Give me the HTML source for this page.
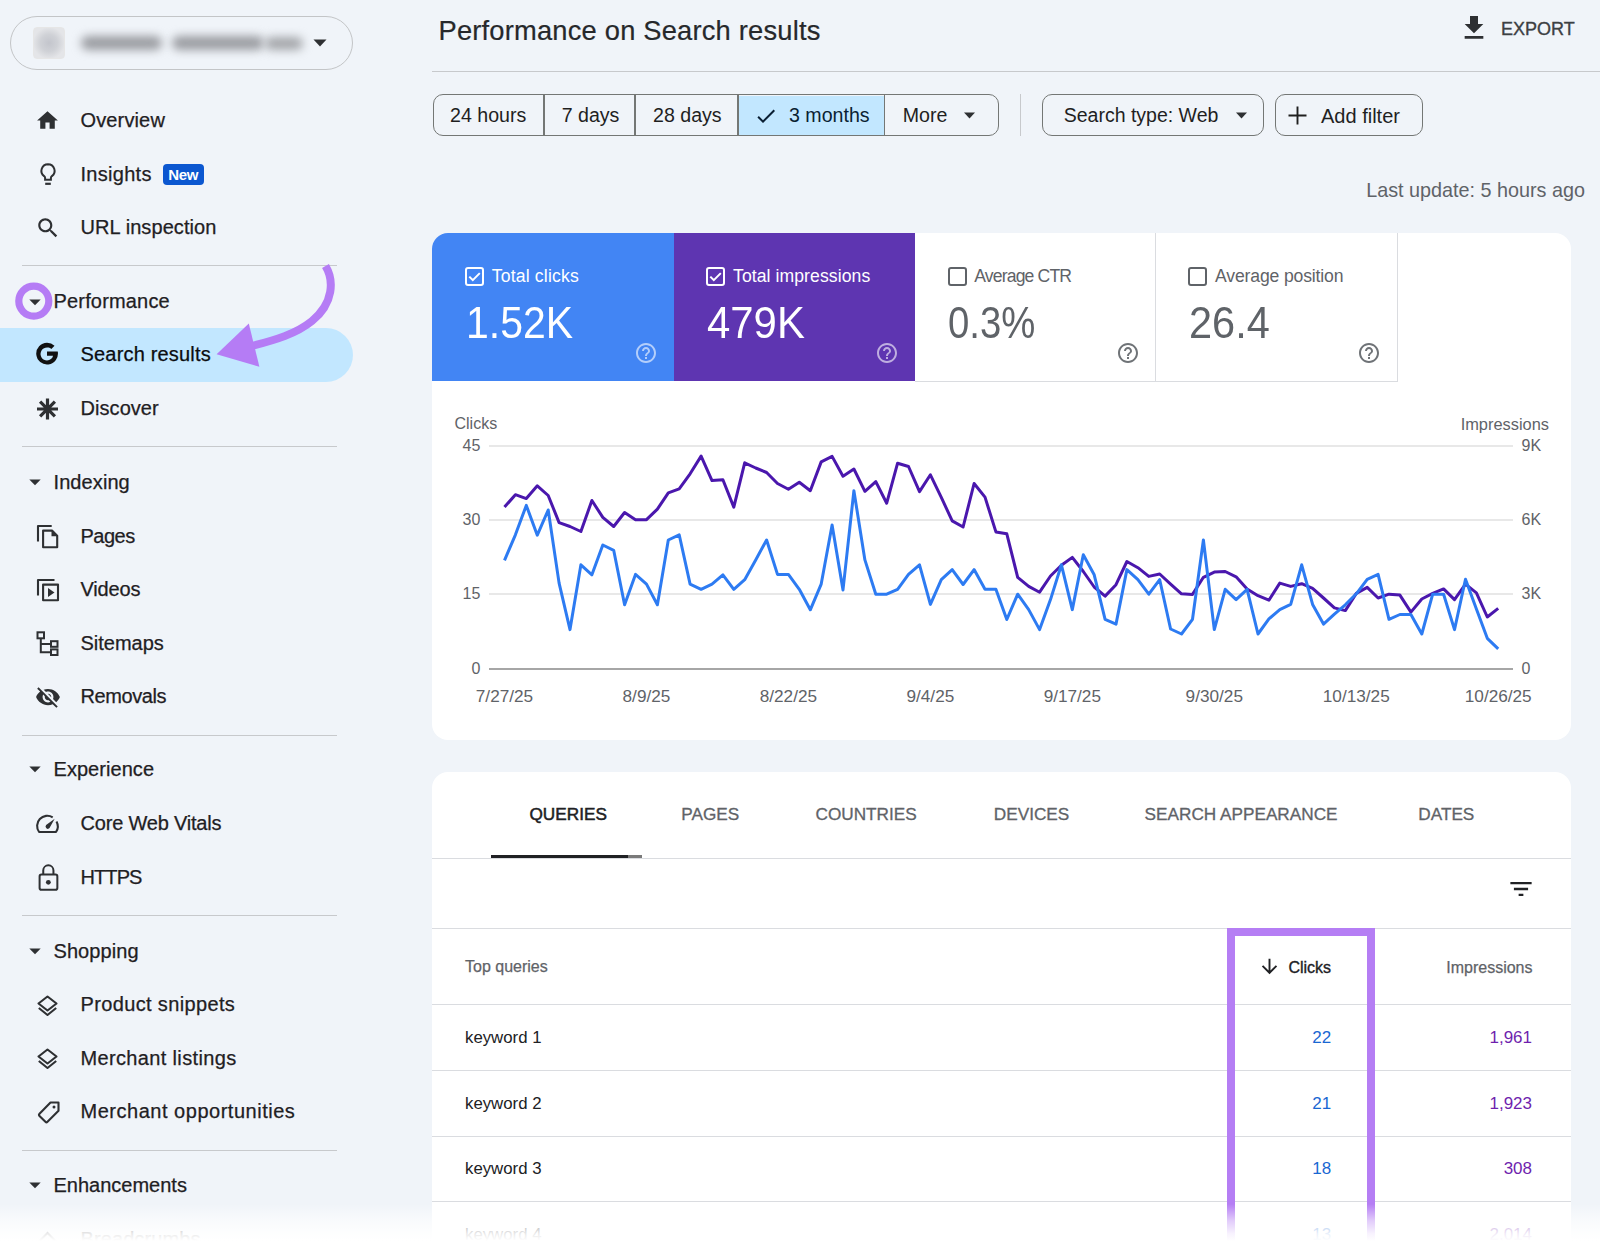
<!DOCTYPE html>
<html><head><meta charset="utf-8"><style>
html,body{margin:0;padding:0;}
body{width:1600px;height:1241px;overflow:hidden;position:relative;background:#f0f4f9;font-family:"Liberation Sans",sans-serif;}
.a{position:absolute;}
.t{position:absolute;line-height:1;white-space:nowrap;}
</style></head><body>
<div class="a" style="left:10.3px;top:15.8px;width:342.4px;height:54px;box-sizing:border-box;border:1.8px solid #c3c5c7;border-radius:27px;"></div>
<div class="a" style="left:33px;top:27px;width:31.5px;height:31.5px;box-sizing:border-box;border:1px solid #e6e6e6;border-radius:4px;background:radial-gradient(circle at 50% 50%,#c3c5cc 0,#cfd1d6 40%,#e4e5e8 75%);"></div>
<div class="a" style="left:81px;top:36px;width:81px;height:14px;background:#9a9ca1;border-radius:7px;filter:blur(5px);"></div>
<div class="a" style="left:172px;top:36px;width:92px;height:14px;background:#9a9ca1;border-radius:7px;filter:blur(5px);"></div>
<div class="a" style="left:265px;top:37px;width:38px;height:13px;background:#a4a6aa;border-radius:7px;filter:blur(5px);"></div>
<svg class="a" style="left:313px;top:38px;" width="14" height="10" viewBox="0 0 14 10"><path d="M0.5 1.5h13L7 8.5z" fill="#2e3033"/></svg>
<div class="t" style="left:80.50px;top:110.27px;font-size:20px;color:#1f2023;font-weight:normal;letter-spacing:0.14px;-webkit-text-stroke:0.25px #1f2023;">Overview</div>
<svg class="a" style="left:35.0px;top:107.8px;" width="25" height="25" viewBox="0 0 24 24"><path d="M10 20v-6h4v6h5v-8h3L12 3 2 12h3v8z" fill="#2e3033"/></svg>
<svg class="a" style="left:36px;top:161px;" width="24" height="26" viewBox="0 0 24 24"><path d="M12 2.2a6.6 6.6 0 0 0-3.9 11.9c.6.5 1 1.2 1 2v1.6h5.8v-1.6c0-.8.4-1.5 1-2A6.6 6.6 0 0 0 12 2.2z" fill="none" stroke="#2e3033" stroke-width="2"/><path d="M9.2 21.8h5.6" stroke="#2e3033" stroke-width="2.2"/></svg>
<div class="t" style="left:80.50px;top:163.87px;font-size:20px;color:#1f2023;font-weight:normal;letter-spacing:0.28px;-webkit-text-stroke:0.25px #1f2023;">Insights</div>
<div class="a" style="left:163px;top:163.5px;width:40.5px;height:21.5px;background:#0b57d0;border-radius:4px;"></div>
<div class="t" style="left:168.30px;top:166.50px;font-size:15px;color:#fff;font-weight:bold;letter-spacing:-0.3px;">New</div>
<div class="t" style="left:80.50px;top:217.47px;font-size:20px;color:#1f2023;font-weight:normal;letter-spacing:0.08px;-webkit-text-stroke:0.25px #1f2023;">URL inspection</div>
<svg class="a" style="left:34.5px;top:214.8px;" width="26" height="26" viewBox="0 0 24 24"><path d="M15.5 14h-.79l-.28-.27C15.41 12.59 16 11.11 16 9.5 16 5.91 13.09 3 9.5 3S3 5.91 3 9.5 5.91 16 9.5 16c1.61 0 3.09-.59 4.23-1.57l.27.28v.79l5 4.99L20.49 19l-4.99-5zm-6 0C7.01 14 5 11.99 5 9.5S7.01 5 9.5 5 14 7.01 14 9.5 11.99 14 9.5 14z" fill="#2e3033"/></svg>
<div class="a" style="left:21.5px;top:264.85px;width:315.5px;height:1.5px;background:#c7c9cc;"></div>
<div class="t" style="left:53.50px;top:290.97px;font-size:20px;color:#1f2023;font-weight:normal;letter-spacing:0.17px;-webkit-text-stroke:0.25px #1f2023;">Performance</div>
<svg class="a" style="left:28.5px;top:298.5px;" width="12" height="7" viewBox="0 0 12 7"><path d="M0.3 0.5h11.4L6 6.3z" fill="#2e3033"/></svg>
<div class="a" style="left:0px;top:328px;width:352.6px;height:53.5px;background:#c2e7ff;border-radius:0 27px 27px 0;"></div>
<svg class="a" style="left:34.7px;top:342.4px;" width="24" height="23" viewBox="1.5 1.5 21 20"><path d="M21.3 9.8H12v3.7h5.3c-.5 2.4-2.6 4.1-5.3 4.1a5.7 5.7 0 1 1 3.8-10l2.8-2.8A9.6 9.6 0 0 0 12 2.1a9.5 9.5 0 1 0 9.4 7.7z" fill="#111"/></svg>
<div class="t" style="left:80.50px;top:344.27px;font-size:20px;color:#0b0d10;font-weight:normal;letter-spacing:0.18px;-webkit-text-stroke:0.25px #0b0d10;">Search results</div>
<svg class="a" style="left:36px;top:398px;" width="23" height="22" viewBox="0 0 23 22"><g stroke="#2e3033" stroke-width="3.2" stroke-linecap="butt"><path d="M11.5 0.5v21M1 11h21M4.1 3.6l14.8 14.8M18.9 3.6L4.1 18.4"/></g></svg>
<div class="t" style="left:80.50px;top:397.82px;font-size:20px;color:#1f2023;font-weight:normal;letter-spacing:0.06px;-webkit-text-stroke:0.25px #1f2023;">Discover</div>
<div class="a" style="left:21.5px;top:445.5px;width:315.5px;height:1.5px;background:#c7c9cc;"></div>
<div class="t" style="left:53.50px;top:472.07px;font-size:20px;color:#1f2023;font-weight:normal;letter-spacing:0.09px;-webkit-text-stroke:0.25px #1f2023;">Indexing</div>
<svg class="a" style="left:28.5px;top:479px;" width="12" height="7" viewBox="0 0 12 7"><path d="M0.3 0.5h11.4L6 6.3z" fill="#2e3033"/></svg>
<svg class="a" style="left:36px;top:523px;" width="24" height="27" viewBox="0 0 24 27"><g fill="none" stroke="#2e3033" stroke-width="2.1" stroke-linejoin="round"><path d="M2 18.5V3h13.7"/><path d="M7.1 7.6H16L21.2 12.8V24.2H7.1Z"/></g><path d="M15.5 7.6L21.2 13.3H15.5Z" fill="#2e3033"/></svg>
<div class="t" style="left:80.50px;top:525.67px;font-size:20px;color:#1f2023;font-weight:normal;letter-spacing:-0.5px;-webkit-text-stroke:0.25px #1f2023;">Pages</div>
<svg class="a" style="left:36px;top:577px;" width="24" height="26" viewBox="0 0 24 26"><g fill="none" stroke="#2e3033" stroke-width="2.1" stroke-linejoin="round"><path d="M2 18.5V3h16.5"/><path d="M7.1 7.6H22V23.2H7.1Z"/></g><path d="M12 11v9l6.5-4.5z" fill="#2e3033"/></svg>
<div class="t" style="left:80.50px;top:578.97px;font-size:20px;color:#1f2023;font-weight:normal;letter-spacing:-0.15px;-webkit-text-stroke:0.25px #1f2023;">Videos</div>
<svg class="a" style="left:36px;top:631px;" width="24" height="26" viewBox="0 0 24 26"><g fill="none" stroke="#2e3033" stroke-width="2"><rect x="1.5" x2="" y="1.3" width="6.5" height="6"/><rect x="15" y="10.2" width="6.5" height="5.6"/><rect x="15" y="18.4" width="6.5" height="5.6"/><path d="M4.8 7.3v14h10.2M4.8 13h10.2"/></g></svg>
<div class="t" style="left:80.50px;top:632.57px;font-size:20px;color:#1f2023;font-weight:normal;letter-spacing:0px;-webkit-text-stroke:0.25px #1f2023;">Sitemaps</div>
<svg class="a" style="left:34.5px;top:684.3px;" width="26" height="26" viewBox="0 0 24 24"><path d="M12 7c2.76 0 5 2.24 5 5 0 .65-.13 1.26-.36 1.83l2.92 2.92c1.51-1.26 2.7-2.89 3.43-4.75-1.73-4.39-6-7.5-11-7.5-1.4 0-2.74.25-3.98.7l2.16 2.160C10.74 7.13 11.35 7 12 7zM2 4.27l2.28 2.28.46.46C3.08 8.3 1.78 10.02 1 12c1.73 4.39 6 7.5 11 7.5 1.550 0 3.03-.3 4.38-.84l.42.42L19.73 22 21 20.73 3.27 3 2 4.27zM7.53 9.8l1.55 1.55c-.05.21-.08.43-.08.65 0 1.66 1.34 3 3 3 .22 0 .44-.03.65-.08l1.55 1.55c-.67.33-1.41.53-2.2.53-2.76 0-5-2.24-5-5 0-.79.2-1.530.53-2.2zm4.31-.78l3.15 3.15.02-.16c0-1.66-1.34-3-3-3l-.17.01z" fill="#2e3033"/></svg>
<div class="t" style="left:80.50px;top:686.17px;font-size:20px;color:#1f2023;font-weight:normal;letter-spacing:-0.4px;-webkit-text-stroke:0.25px #1f2023;">Removals</div>
<div class="a" style="left:21.5px;top:734.5px;width:315.5px;height:1.5px;background:#c7c9cc;"></div>
<div class="t" style="left:53.50px;top:759.27px;font-size:20px;color:#1f2023;font-weight:normal;letter-spacing:0.05px;-webkit-text-stroke:0.25px #1f2023;">Experience</div>
<svg class="a" style="left:28.5px;top:766.2px;" width="12" height="7" viewBox="0 0 12 7"><path d="M0.3 0.5h11.4L6 6.3z" fill="#2e3033"/></svg>
<svg class="a" style="left:30px;top:808px;" width="36" height="32" viewBox="0 0 36 32"><path d="M26.5 13.4A10.2 10.2 0 0 1 26.01 24L9.09 24A10.2 10.2 0 0 1 22.7 9.3" fill="none" stroke="#2e3033" stroke-width="2.1" stroke-linejoin="round"/><path d="M24.7 10.8L19.52 20.12A2.3 2.3 0 0 1 16.08 17.08Z" fill="#2e3033"/></svg>
<div class="t" style="left:80.50px;top:813.27px;font-size:20px;color:#1f2023;font-weight:normal;letter-spacing:-0.2px;-webkit-text-stroke:0.25px #1f2023;">Core Web Vitals</div>
<svg class="a" style="left:36.5px;top:863px;" width="23" height="28" viewBox="0 0 23 28"><path d="M6.25 11.6V7.45A5.1 5.1 0 0 1 16.45 7.45V11.6" fill="none" stroke="#2e3033" stroke-width="2"/><rect x="2.6" y="11.6" width="17.75" height="15.15" rx="1.8" fill="none" stroke="#2e3033" stroke-width="2"/><circle cx="11.35" cy="19.3" r="2.4" fill="#2e3033"/></svg>
<div class="t" style="left:80.50px;top:866.82px;font-size:20px;color:#1f2023;font-weight:normal;letter-spacing:-0.9px;-webkit-text-stroke:0.25px #1f2023;">HTTPS</div>
<div class="a" style="left:21.5px;top:914.75px;width:315.5px;height:1.5px;background:#c7c9cc;"></div>
<div class="t" style="left:53.50px;top:940.67px;font-size:20px;color:#1f2023;font-weight:normal;letter-spacing:0.07px;-webkit-text-stroke:0.25px #1f2023;">Shopping</div>
<svg class="a" style="left:28.5px;top:947.6px;" width="12" height="7" viewBox="0 0 12 7"><path d="M0.3 0.5h11.4L6 6.3z" fill="#2e3033"/></svg>
<svg class="a" style="left:37px;top:994.5px;" width="21" height="22" viewBox="0 0 21 22"><g fill="none" stroke="#2e3033" stroke-width="2.1" stroke-linejoin="round"><path d="M10.5 1.5L19.5 8.5 10.5 15.5 1.5 8.5z"/><path d="M1.8 13l8.7 7 8.7-7"/></g></svg>
<div class="t" style="left:80.50px;top:994.27px;font-size:20px;color:#1f2023;font-weight:normal;letter-spacing:0.36px;-webkit-text-stroke:0.25px #1f2023;">Product snippets</div>
<svg class="a" style="left:37px;top:1048px;" width="21" height="22" viewBox="0 0 21 22"><g fill="none" stroke="#2e3033" stroke-width="2.1" stroke-linejoin="round"><path d="M10.5 1.5L19.5 8.5 10.5 15.5 1.5 8.5z"/><path d="M1.8 13l8.7 7 8.7-7"/></g></svg>
<div class="t" style="left:80.50px;top:1047.87px;font-size:20px;color:#1f2023;font-weight:normal;letter-spacing:0.35px;-webkit-text-stroke:0.25px #1f2023;">Merchant listings</div>
<svg class="a" style="left:37px;top:1100px;" width="24" height="24" viewBox="0 0 24 24"><path d="M2.5 13.8L13.5 2.5h8v8.2L10.5 21.8a1.5 1.5 0 0 1-2.1 0L2.5 15.9a1.5 1.5 0 0 1 0-2.1z" fill="none" stroke="#2e3033" stroke-width="2.1" stroke-linejoin="round"/><circle cx="17" cy="7" r="1.5" fill="#2e3033"/></svg>
<div class="t" style="left:80.50px;top:1101.37px;font-size:20px;color:#1f2023;font-weight:normal;letter-spacing:0.52px;-webkit-text-stroke:0.25px #1f2023;">Merchant opportunities</div>
<div class="a" style="left:21.5px;top:1149.95px;width:315.5px;height:1.5px;background:#c7c9cc;"></div>
<div class="t" style="left:53.50px;top:1174.87px;font-size:20px;color:#1f2023;font-weight:normal;letter-spacing:0px;-webkit-text-stroke:0.25px #1f2023;">Enhancements</div>
<svg class="a" style="left:28.5px;top:1181.8px;" width="12" height="7" viewBox="0 0 12 7"><path d="M0.3 0.5h11.4L6 6.3z" fill="#2e3033"/></svg>
<svg class="a" style="left:37px;top:1230px;" width="21" height="14" viewBox="0 0 21 14"><path d="M1.5 12L10.5 3l9 9" fill="none" stroke="#2e3033" stroke-width="2.1"/></svg>
<div class="t" style="left:80.50px;top:1228.57px;font-size:20px;color:#1f2023;font-weight:normal;letter-spacing:0.1px;-webkit-text-stroke:0.25px #1f2023;">Breadcrumbs</div>
<div class="t" style="left:438.50px;top:16.69px;font-size:27.3px;color:#26282b;font-weight:normal;letter-spacing:0.2px;-webkit-text-stroke:0.2px #26282b;">Performance on Search results</div>
<svg class="a" style="left:1458px;top:12px;" width="32" height="32" viewBox="0 0 24 24"><path d="M19 9h-4V3H9v6H5l7 7 7-7zM5 18v2h14v-2H5z" fill="#2e3033"/></svg>
<div class="t" style="left:1501.00px;top:20.26px;font-size:18px;color:#3c4043;font-weight:normal;letter-spacing:0px;-webkit-text-stroke:0.35px #3c4043;">EXPORT</div>
<div class="a" style="left:432px;top:70.6px;width:1168px;height:1.3px;background:#c7c9cc;"></div>
<div class="a" style="left:432.5px;top:94.3px;width:566px;height:42px;box-sizing:border-box;border:1.5px solid #747775;border-radius:10px;overflow:hidden;"></div>
<div class="a" style="left:738px;top:95.5px;width:147px;height:39.5px;background:#c2e7ff;"></div>
<div class="a" style="left:543.05px;top:95px;width:1.5px;height:41px;background:#747775;"></div>
<div class="a" style="left:634.25px;top:95px;width:1.5px;height:41px;background:#747775;"></div>
<div class="a" style="left:737.05px;top:95px;width:1.5px;height:41px;background:#747775;"></div>
<div class="a" style="left:883.75px;top:95px;width:1.5px;height:41px;background:#747775;"></div>
<div class="t" style="left:450.00px;top:106.40px;font-size:19.6px;color:#1f1f1f;font-weight:normal;">24 hours</div>
<div class="t" style="left:561.70px;top:106.40px;font-size:19.6px;color:#1f1f1f;font-weight:normal;">7 days</div>
<div class="t" style="left:653.00px;top:106.40px;font-size:19.6px;color:#1f1f1f;font-weight:normal;">28 days</div>
<svg class="a" style="left:754px;top:104px;" width="24" height="24" viewBox="0 0 24 24"><path d="M9 16.17L4.83 12l-1.42 1.41L9 19 21 7l-1.41-1.41z" fill="#0a1f33"/></svg>
<div class="t" style="left:789.00px;top:106.40px;font-size:19.6px;color:#0a1f33;font-weight:normal;">3 months</div>
<div class="t" style="left:902.80px;top:106.40px;font-size:19.6px;color:#1f1f1f;font-weight:normal;">More</div>
<svg class="a" style="left:964px;top:112px;" width="11" height="7" viewBox="0 0 11 7"><path d="M0 0.5h11L5.5 6.5z" fill="#2e3033"/></svg>
<div class="a" style="left:1020px;top:94px;width:1.3px;height:42px;background:#c7c9cc;"></div>
<div class="a" style="left:1042px;top:94.3px;width:222px;height:42px;box-sizing:border-box;border:1.5px solid #747775;border-radius:10px;"></div>
<div class="t" style="left:1063.70px;top:105.99px;font-size:19.5px;color:#1f1f1f;font-weight:normal;">Search type: Web</div>
<svg class="a" style="left:1235.5px;top:112px;" width="11" height="7" viewBox="0 0 11 7"><path d="M0 0.5h11L5.5 6.5z" fill="#2e3033"/></svg>
<div class="a" style="left:1274.5px;top:94.3px;width:148px;height:42px;box-sizing:border-box;border:1.5px solid #747775;border-radius:10px;"></div>
<svg class="a" style="left:1288px;top:106px;" width="19" height="19" viewBox="0 0 19 19"><path d="M9.5 0.5v18M0.5 9.5h18" stroke="#1f1f1f" stroke-width="1.9"/></svg>
<div class="t" style="left:1321.00px;top:105.57px;font-size:20px;color:#1f1f1f;font-weight:normal;">Add filter</div>
<div class="t" style="right:15.00px;top:181.24px;font-size:19.8px;color:#5f6368;font-weight:normal;">Last update: 5 hours ago</div>
<div class="a" style="left:432px;top:233px;width:1139px;height:507px;background:#fff;border-radius:16px;"></div>
<div class="a" style="left:432px;top:233px;width:241.5px;height:148px;background:#4285f4;border-top-left-radius:16px;"></div>
<div class="a" style="left:673.5px;top:233px;width:241.3px;height:148px;background:#5e35b1;"></div>
<div class="a" style="left:914.8px;top:380.5px;width:482.5px;height:1.3px;background:#dadce0;"></div>
<div class="a" style="left:1154.9px;top:233px;width:1.2px;height:148.5px;background:#dadce0;"></div>
<div class="a" style="left:1396.5px;top:233px;width:1.2px;height:148.5px;background:#dadce0;"></div>
<svg class="a" style="left:464.6px;top:266.6px;" width="19" height="19" viewBox="0 0 19 19"><rect x="1" y="1" width="17" height="17" rx="2" fill="none" stroke="#fff" stroke-width="2"/><path d="M4.3 9.6l3.5 3.5 7-7" fill="none" stroke="#fff" stroke-width="2"/></svg>
<div class="t" style="left:491.80px;top:268.30px;font-size:17.6px;color:#fff;font-weight:normal;letter-spacing:0.17px;">Total clicks</div>
<div class="t" style="left:465.80px;top:300.40px;font-size:45px;color:#fff;font-weight:normal;transform:scaleX(0.91);transform-origin:0 0;">1.52K</div>
<svg class="a" style="left:633.7px;top:340.9px;" width="24" height="24" viewBox="0 0 24 24"><path d="M11 18h2v-2h-2v2zm1-16C6.48 2 2 6.48 2 12s4.48 10 10 10 10-4.48 10-10S17.520 2 12 2zm0 18c-4.41 0-8-3.590-8-8s3.59-8 8-8 8 3.59 8 8-3.59 8-8 8zm0-14c-2.21 0-4 1.79-4 4h2c0-1.1.9-2 2-2s2 .9 2 2c0 2-3 1.75-3 5h2c0-2.25 3-2.5 3-5 0-2.21-1.79-4-4-4z" fill="rgba(255,255,255,0.6)"/></svg>
<svg class="a" style="left:705.8px;top:266.6px;" width="19" height="19" viewBox="0 0 19 19"><rect x="1" y="1" width="17" height="17" rx="2" fill="none" stroke="#fff" stroke-width="2"/><path d="M4.3 9.6l3.5 3.5 7-7" fill="none" stroke="#fff" stroke-width="2"/></svg>
<div class="t" style="left:733.00px;top:268.30px;font-size:17.6px;color:#fff;font-weight:normal;letter-spacing:0.08px;">Total impressions</div>
<div class="t" style="left:707.00px;top:300.40px;font-size:45px;color:#fff;font-weight:normal;transform:scaleX(0.931);transform-origin:0 0;">479K</div>
<svg class="a" style="left:874.9px;top:340.9px;" width="24" height="24" viewBox="0 0 24 24"><path d="M11 18h2v-2h-2v2zm1-16C6.48 2 2 6.48 2 12s4.48 10 10 10 10-4.48 10-10S17.520 2 12 2zm0 18c-4.41 0-8-3.590-8-8s3.59-8 8-8 8 3.59 8 8-3.59 8-8 8zm0-14c-2.21 0-4 1.79-4 4h2c0-1.1.9-2 2-2s2 .9 2 2c0 2-3 1.75-3 5h2c0-2.25 3-2.5 3-5 0-2.21-1.79-4-4-4z" fill="rgba(255,255,255,0.6)"/></svg>
<svg class="a" style="left:947.5999999999999px;top:266.8px;" width="19" height="19" viewBox="0 0 19 19"><rect x="1" y="1" width="17" height="17" rx="2" fill="none" stroke="#5f6368" stroke-width="2"/></svg>
<div class="t" style="left:974.30px;top:268.30px;font-size:17.6px;color:#5f6368;font-weight:normal;letter-spacing:-0.85px;">Average CTR</div>
<div class="t" style="left:948.30px;top:300.40px;font-size:45px;color:#5f6368;font-weight:normal;transform:scaleX(0.852);transform-origin:0 0;">0.3%</div>
<svg class="a" style="left:1116.2px;top:340.9px;" width="24" height="24" viewBox="0 0 24 24"><path d="M11 18h2v-2h-2v2zm1-16C6.48 2 2 6.48 2 12s4.48 10 10 10 10-4.48 10-10S17.520 2 12 2zm0 18c-4.41 0-8-3.590-8-8s3.59-8 8-8 8 3.59 8 8-3.59 8-8 8zm0-14c-2.21 0-4 1.79-4 4h2c0-1.1.9-2 2-2s2 .9 2 2c0 2-3 1.75-3 5h2c0-2.25 3-2.5 3-5 0-2.21-1.79-4-4-4z" fill="#6f7377"/></svg>
<svg class="a" style="left:1188.3px;top:266.8px;" width="19" height="19" viewBox="0 0 19 19"><rect x="1" y="1" width="17" height="17" rx="2" fill="none" stroke="#5f6368" stroke-width="2"/></svg>
<div class="t" style="left:1215.00px;top:268.30px;font-size:17.6px;color:#5f6368;font-weight:normal;letter-spacing:-0.15px;">Average position</div>
<div class="t" style="left:1189.00px;top:300.40px;font-size:45px;color:#5f6368;font-weight:normal;transform:scaleX(0.922);transform-origin:0 0;">26.4</div>
<svg class="a" style="left:1356.9px;top:340.9px;" width="24" height="24" viewBox="0 0 24 24"><path d="M11 18h2v-2h-2v2zm1-16C6.48 2 2 6.48 2 12s4.48 10 10 10 10-4.48 10-10S17.520 2 12 2zm0 18c-4.41 0-8-3.590-8-8s3.59-8 8-8 8 3.59 8 8-3.59 8-8 8zm0-14c-2.21 0-4 1.79-4 4h2c0-1.1.9-2 2-2s2 .9 2 2c0 2-3 1.75-3 5h2c0-2.25 3-2.5 3-5 0-2.21-1.79-4-4-4z" fill="#6f7377"/></svg>
<div class="t" style="left:454.50px;top:415.85px;font-size:16px;color:#5f6368;font-weight:normal;">Clicks</div>
<div class="t" style="right:51.00px;top:415.51px;font-size:16.4px;color:#5f6368;font-weight:normal;">Impressions</div>
<div class="a" style="left:489px;top:445.45px;width:1024px;height:1.5px;background:#e8e8e8;"></div>
<div class="t" style="right:1119.70px;top:438.25px;font-size:16px;color:#5f6368;font-weight:normal;">45</div>
<div class="t" style="left:1521.50px;top:438.25px;font-size:16px;color:#5f6368;font-weight:normal;">9K</div>
<div class="a" style="left:489px;top:519.25px;width:1024px;height:1.5px;background:#e8e8e8;"></div>
<div class="t" style="right:1119.70px;top:512.05px;font-size:16px;color:#5f6368;font-weight:normal;">30</div>
<div class="t" style="left:1521.50px;top:512.05px;font-size:16px;color:#5f6368;font-weight:normal;">6K</div>
<div class="a" style="left:489px;top:593.45px;width:1024px;height:1.5px;background:#e8e8e8;"></div>
<div class="t" style="right:1119.70px;top:586.25px;font-size:16px;color:#5f6368;font-weight:normal;">15</div>
<div class="t" style="left:1521.50px;top:586.25px;font-size:16px;color:#5f6368;font-weight:normal;">3K</div>
<div class="a" style="left:489px;top:668px;width:1024px;height:2px;background:#a6a6a6;"></div>
<div class="t" style="right:1119.70px;top:660.55px;font-size:16px;color:#5f6368;font-weight:normal;">0</div>
<div class="t" style="left:1521.50px;top:660.55px;font-size:16px;color:#5f6368;font-weight:normal;">0</div>
<div class="t" style="left:204.50px;width:600px;text-align:center;top:688.04px;font-size:17.2px;color:#5f6368;font-weight:normal;">7/27/25</div>
<div class="t" style="left:346.46px;width:600px;text-align:center;top:688.04px;font-size:17.2px;color:#5f6368;font-weight:normal;">8/9/25</div>
<div class="t" style="left:488.42px;width:600px;text-align:center;top:688.04px;font-size:17.2px;color:#5f6368;font-weight:normal;">8/22/25</div>
<div class="t" style="left:630.38px;width:600px;text-align:center;top:688.04px;font-size:17.2px;color:#5f6368;font-weight:normal;">9/4/25</div>
<div class="t" style="left:772.34px;width:600px;text-align:center;top:688.04px;font-size:17.2px;color:#5f6368;font-weight:normal;">9/17/25</div>
<div class="t" style="left:914.30px;width:600px;text-align:center;top:688.04px;font-size:17.2px;color:#5f6368;font-weight:normal;">9/30/25</div>
<div class="t" style="left:1056.26px;width:600px;text-align:center;top:688.04px;font-size:17.2px;color:#5f6368;font-weight:normal;">10/13/25</div>
<div class="t" style="left:1198.22px;width:600px;text-align:center;top:688.04px;font-size:17.2px;color:#5f6368;font-weight:normal;">10/26/25</div>
<svg class="a" style="left:0;top:0" width="1600" height="1241"><polyline points="504.5,507.1 515.4,494.7 526.3,498.6 537.3,485.8 548.2,495.5 559.1,522.6 570.0,526.5 580.9,531.5 591.9,500.5 602.8,517.4 613.7,526.5 624.6,512.5 635.5,519.7 646.5,519.7 657.4,509.1 668.3,492.8 679.2,488.9 690.1,473.8 701.1,456.1 712.0,480.6 722.9,479.7 733.8,507.1 744.7,462.8 755.7,468.0 766.6,472.5 777.5,483.5 788.4,489.3 799.3,482.2 810.3,490.7 821.2,461.9 832.1,456.4 843.0,476.2 853.9,469.0 864.9,491.3 875.8,481.6 886.7,503.2 897.6,463.2 908.5,466.5 919.5,491.6 930.4,474.8 941.3,497.4 952.2,520.9 963.1,527.0 974.1,483.5 985.0,497.1 995.9,531.9 1006.8,533.8 1017.7,577.3 1028.7,586.4 1039.6,592.2 1050.5,576.0 1061.4,565.3 1072.3,557.4 1083.3,571.5 1094.2,587.0 1105.1,596.1 1116.0,584.7 1126.9,561.5 1137.9,567.7 1148.8,576.4 1159.7,574.0 1170.6,584.1 1181.5,593.8 1192.5,594.4 1203.4,577.3 1214.3,572.1 1225.2,571.5 1236.1,576.8 1247.1,588.9 1258.0,595.7 1268.9,600.2 1279.8,583.1 1290.7,586.4 1301.7,583.7 1312.6,588.4 1323.5,598.0 1334.4,607.9 1345.3,610.6 1356.3,593.4 1367.2,587.4 1378.1,598.0 1389.0,594.2 1399.9,595.1 1410.9,612.1 1421.8,599.0 1432.7,593.4 1443.6,588.9 1454.5,599.6 1465.5,584.1 1476.4,592.8 1487.3,617.0 1498.2,608.3" fill="none" stroke="#4a17ad" stroke-width="3" stroke-linejoin="round"/><polyline points="504.5,560.3 515.4,534.8 526.3,505.4 537.3,535.2 548.2,510.0 559.1,583.1 570.0,629.6 580.9,564.8 591.9,574.8 602.8,545.0 613.7,550.3 624.6,604.8 635.5,574.4 646.5,584.1 657.4,604.8 668.3,540.0 679.2,534.8 690.1,584.1 701.1,589.3 712.0,584.1 722.9,574.8 733.8,589.3 744.7,579.7 755.7,559.9 766.6,540.0 777.5,574.4 788.4,574.4 799.3,589.3 810.3,609.8 821.2,584.1 832.1,525.1 843.0,589.9 853.9,490.7 864.9,559.9 875.8,594.2 886.7,594.2 897.6,589.3 908.5,574.4 919.5,564.8 930.4,604.4 941.3,579.7 952.2,569.6 963.1,584.5 974.1,569.6 985.0,589.3 995.9,589.3 1006.8,619.5 1017.7,594.2 1028.7,609.6 1039.6,629.6 1050.5,599.6 1061.4,564.8 1072.3,609.6 1083.3,554.7 1094.2,574.8 1105.1,619.3 1116.0,624.1 1126.9,569.6 1137.9,579.7 1148.8,594.2 1159.7,579.7 1170.6,629.0 1181.5,634.0 1192.5,619.3 1203.4,540.0 1214.3,629.6 1225.2,589.3 1236.1,599.6 1247.1,589.3 1258.0,634.0 1268.9,618.9 1279.8,609.6 1290.7,604.4 1301.7,564.8 1312.6,604.4 1323.5,624.1 1334.4,614.1 1345.3,604.8 1356.3,593.8 1367.2,579.3 1378.1,574.4 1389.0,619.3 1399.9,614.5 1410.9,614.5 1421.8,634.0 1432.7,594.2 1443.6,594.2 1454.5,629.6 1465.5,579.3 1476.4,608.9 1487.3,638.3 1498.2,648.9" fill="none" stroke="#2d7bf2" stroke-width="3" stroke-linejoin="round"/></svg>
<div class="a" style="left:432px;top:772px;width:1139px;height:600px;background:#fff;border-radius:16px 16px 0 0;"></div>
<div class="t" style="left:529.50px;top:806.34px;font-size:17.2px;color:#202124;font-weight:normal;-webkit-text-stroke:0.5px #202124;">QUERIES</div>
<div class="t" style="left:681.30px;top:806.34px;font-size:17.2px;color:#5f6368;font-weight:normal;-webkit-text-stroke:0.3px #5f6368;">PAGES</div>
<div class="t" style="left:815.50px;top:806.34px;font-size:17.2px;color:#5f6368;font-weight:normal;-webkit-text-stroke:0.3px #5f6368;">COUNTRIES</div>
<div class="t" style="left:993.80px;top:806.34px;font-size:17.2px;color:#5f6368;font-weight:normal;-webkit-text-stroke:0.3px #5f6368;">DEVICES</div>
<div class="t" style="left:1144.60px;top:806.34px;font-size:17.2px;color:#5f6368;font-weight:normal;-webkit-text-stroke:0.3px #5f6368;">SEARCH APPEARANCE</div>
<div class="t" style="left:1418.30px;top:806.34px;font-size:17.2px;color:#5f6368;font-weight:normal;-webkit-text-stroke:0.3px #5f6368;">DATES</div>
<div class="a" style="left:432px;top:858px;width:1139px;height:1.3px;background:#dadce0;"></div>
<div class="a" style="left:490.5px;top:854.5px;width:137.5px;height:3.5px;background:#202124;"></div>
<div class="a" style="left:628px;top:854.5px;width:14px;height:3.5px;background:#7a7a7a;"></div>
<svg class="a" style="left:1508px;top:876px;" width="26" height="26" viewBox="1 1 22 22"><path d="M10 18h4v-2h-4v2zM3 6v2h18V6H3zm3 7h12v-2H6v2z" fill="#202124"/></svg>
<div class="a" style="left:432px;top:927.5px;width:1139px;height:1.3px;background:#dadce0;"></div>
<div class="t" style="left:465.00px;top:959.45px;font-size:16px;color:#5f6368;font-weight:normal;-webkit-text-stroke:0.25px #5f6368;">Top queries</div>
<svg class="a" style="left:1259px;top:956px;" width="21" height="21" viewBox="1 1 22 22"><path d="M20 12l-1.41-1.41L13 16.17V4h-2v12.17l-5.58-5.59L4 12l8 8 8-8z" fill="#202124"/></svg>
<div class="t" style="right:268.90px;top:959.65px;font-size:16px;color:#202124;font-weight:normal;-webkit-text-stroke:0.35px #202124;">Clicks</div>
<div class="t" style="right:67.50px;top:959.65px;font-size:16px;color:#5f6368;font-weight:normal;-webkit-text-stroke:0.25px #5f6368;">Impressions</div>
<div class="a" style="left:432px;top:1004px;width:1139px;height:1.3px;background:#dadce0;"></div>
<div class="t" style="left:465.00px;top:1030.28px;font-size:16.8px;color:#202124;font-weight:normal;">keyword 1</div>
<div class="t" style="right:268.90px;top:1029.01px;font-size:17px;color:#1967d2;font-weight:normal;">22</div>
<div class="t" style="right:68.00px;top:1029.01px;font-size:17px;color:#6f1fae;font-weight:normal;">1,961</div>
<div class="a" style="left:432px;top:1070.0px;width:1139px;height:1.3px;background:#dadce0;"></div>
<div class="t" style="left:465.00px;top:1095.88px;font-size:16.8px;color:#202124;font-weight:normal;">keyword 2</div>
<div class="t" style="right:268.90px;top:1094.61px;font-size:17px;color:#1967d2;font-weight:normal;">21</div>
<div class="t" style="right:68.00px;top:1094.61px;font-size:17px;color:#6f1fae;font-weight:normal;">1,923</div>
<div class="a" style="left:432px;top:1135.6px;width:1139px;height:1.3px;background:#dadce0;"></div>
<div class="t" style="left:465.00px;top:1161.48px;font-size:16.8px;color:#202124;font-weight:normal;">keyword 3</div>
<div class="t" style="right:268.90px;top:1160.21px;font-size:17px;color:#1967d2;font-weight:normal;">18</div>
<div class="t" style="right:68.00px;top:1160.21px;font-size:17px;color:#6f1fae;font-weight:normal;">308</div>
<div class="a" style="left:432px;top:1201.2px;width:1139px;height:1.3px;background:#dadce0;"></div>
<div class="t" style="left:465.00px;top:1227.08px;font-size:16.8px;color:#202124;font-weight:normal;">keyword 4</div>
<div class="t" style="right:268.90px;top:1225.81px;font-size:17px;color:#1967d2;font-weight:normal;">13</div>
<div class="t" style="right:68.00px;top:1225.81px;font-size:17px;color:#6f1fae;font-weight:normal;">2,014</div>
<div class="a" style="left:1226.6px;top:928px;width:148.4px;height:400px;box-sizing:border-box;border:8.5px solid #b57ef4;border-bottom:none;"></div>
<svg class="a" style="left:0;top:0" width="400" height="400"><circle cx="33.8" cy="301.1" r="15" fill="none" stroke="#b57cf5" stroke-width="7.2"/><path d="M325.5 266C334 280 334 303 312 321C296 334 275 340 252 346" fill="none" stroke="#b57cf5" stroke-width="8"/><path d="M216.6 354.2L248.8 323.5L259.4 366.8z" fill="#b57cf5"/></svg>
<div class="a" style="left:0px;top:1204px;width:1600px;height:37px;background:linear-gradient(to bottom,rgba(255,255,255,0) 0%,rgba(255,255,255,0.6) 45%,rgba(255,255,255,0.9) 80%,#fff 100%);"></div>
</body></html>
